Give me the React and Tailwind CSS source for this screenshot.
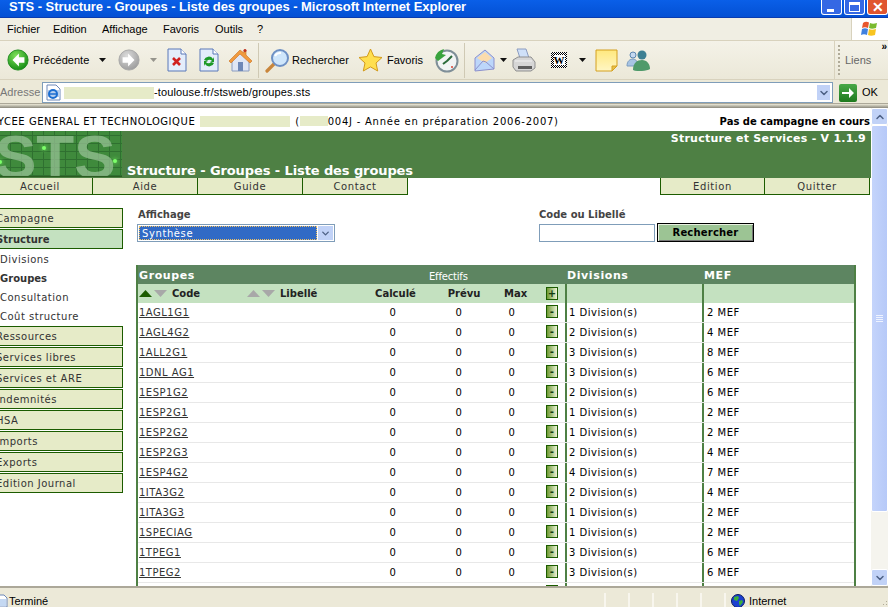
import { ChevronDown, ChevronUp } from 'lucide-react';

const rows = [
	['1AGL1G1', 1, 2],
	['1AGL4G2', 2, 4],
	['1ALL2G1', 3, 8],
	['1DNL AG1', 3, 6],
	['1ESP1G2', 2, 6],
	['1ESP2G1', 1, 2],
	['1ESP2G2', 1, 2],
	['1ESP2G3', 2, 4],
	['1ESP4G2', 4, 7],
	['1ITA3G2', 2, 4],
	['1ITA3G3', 1, 2],
	['1SPECIAG', 1, 2],
	['1TPEG1', 3, 6],
	['1TPEG2', 3, 6],
];

const sideBottom = ['Ressources', 'Services libres', 'Services et ARE', 'Indemnités', 'HSA', 'Imports', 'Exports', 'Edition Journal'];

const Drop = () => (
	<svg width="7" height="4" viewBox="0 0 7 4" className="shrink-0 block"><path d="M0 0h7L3.5 4z" fill="#111" /></svg>
);

const RoundArrow = ({ dir, gray }) => (
	<svg width="22" height="22" viewBox="0 0 24 24" className="shrink-0 block">
		<defs>
			<radialGradient id={gray ? 'rg' : 'rc'} cx="40%" cy="30%" r="75%">
				<stop offset="0" stopColor={gray ? '#dcdcdc' : '#7ee05a'} />
				<stop offset="1" stopColor={gray ? '#9a9a9a' : '#128a12'} />
			</radialGradient>
		</defs>
		<circle cx="12" cy="12" r="11" fill={'url(#' + (gray ? 'rg' : 'rc') + ')'} stroke={gray ? '#a5a5a5' : '#1d8a1d'} />
		<path d={dir === 'left' ? 'M13 5l-7 7 7 7v-4h6V9h-6z' : 'M11 5l7 7-7 7v-4H5V9h6z'} fill="#fff" />
	</svg>
);

const DocIcon = ({ children }) => (
	<svg width="20" height="24" viewBox="0 0 20 24" className="shrink-0 block">
		<path d="M1 1h13l5 5v17H1z" fill="#e4edfb" stroke="#5a78b8" />
		<path d="M14 1v5h5" fill="#fff" stroke="#5a78b8" />
		{children}
	</svg>
);

const HomeIcon = () => (
	<svg width="25" height="24" viewBox="0 0 25 24" className="shrink-0 block">
		<path d="M4 12v11h17V12L12 4z" fill="#dfe6f5" stroke="#8a9cc0" />
		<path d="M1 13L12 2l4 3V2h2v5l6 6-2 2L12 6 3 15z" fill="#f09a3e" stroke="#c96f1c" strokeWidth=".6" />
		<rect x="10" y="14" width="5" height="9" fill="#6e88b8" />
		<circle cx="17" cy="2.5" r="1.5" fill="#c03020" />
	</svg>
);

const SearchIcon = () => (
	<svg width="25" height="25" viewBox="0 0 25 25" className="shrink-0 block">
		<path d="M2 23l8-8" stroke="#c9863c" strokeWidth="3.2" strokeLinecap="round" />
		<circle cx="15" cy="10" r="8" fill="#cfe6fb" stroke="#6e90c4" strokeWidth="2" />
		<path d="M10 8a6 5 0 0 1 6-3" stroke="#fff" strokeWidth="2" fill="none" />
	</svg>
);

const StarIcon = () => (
	<svg width="25" height="24" viewBox="0 0 25 24" className="shrink-0 block">
		<path d="M12.500 1l3.400 7.600 8.100.9-6 5.500 1.700 8-7.200-4.100-7.200 4.100 1.700-8-6-5.500 8.100-.9z" fill="#ffdf4f" stroke="#d29a1c" />
	</svg>
);

const HistoryIcon = () => (
	<svg width="25" height="25" viewBox="0 0 25 25" className="shrink-0 block">
		<circle cx="13" cy="13" r="10.500" fill="#f2f4f4" stroke="#7f8f98" strokeWidth="2" />
		<path d="M13 13l5-5M13 13l-4 3" stroke="#2b6b3a" strokeWidth="2" />
		<path d="M1 10a12 12 0 0 1 9-9l-2 5 4 1-8 6z" fill="#39a33d" />
		<circle cx="18" cy="19" r="1" fill="#d84030" />
	</svg>
);

const MailIcon = () => (
	<svg width="21" height="23" viewBox="0 0 21 23" className="shrink-0 block">
		<path d="M1 9l10-8 9 8v11l-19 2z" fill="#bcd6fa" stroke="#8c90cc" />
		<path d="M3 9l8-6 7 6-7 5z" fill="#fbdcae" />
		<path d="M1 21l8-9 3 1 8 7" stroke="#8c90cc" fill="none" />
	</svg>
);

const PrinterIcon = () => (
	<svg width="24" height="24" viewBox="0 0 24 24" className="shrink-0 block">
		<path d="M5 1h9l3 9H8z" fill="#cfe0f8" stroke="#8c9cc0" />
		<path d="M1 12l5-3h13l4 5v6l-4 3H4l-3-4z" fill="#d6d6d6" stroke="#8f8f8f" />
		<path d="M6 18h14v3H6z" fill="#5e5e5e" />
		<path d="M3 13h17" stroke="#f2f2f2" />
	</svg>
);

const WordIcon = () => (
	<div className="w-4 h-4 shrink-0 bg-[repeating-conic-gradient(#000_0_25%,#fff_0_50%)] bg-[length:2px_2px] flex items-center justify-center">
		<span className="bg-white text-[11px] leading-[10px] font-bold font-['Liberation_Serif',serif] text-black">W</span>
	</div>
);

const NoteIcon = () => (
	<svg width="23" height="23" viewBox="0 0 23 23" className="shrink-0 block">
		<defs>
			<linearGradient id="note" x1="0" y1="0" x2="0" y2="1">
				<stop offset="0" stopColor="#ffe87e" />
				<stop offset="1" stopColor="#fff6c4" />
			</linearGradient>
		</defs>
		<path d="M1 1h21v16l-5 5H1z" fill="url(#note)" stroke="#d4a020" />
		<path d="M22 17h-5v5z" fill="#e8c04a" stroke="#d4a020" />
	</svg>
);

const PeopleIcon = () => (
	<svg width="25" height="21" viewBox="0 0 25 21" className="shrink-0 block">
		<circle cx="7" cy="5" r="3" fill="#c4d8f0" stroke="#5c86b0" />
		<path d="M1 16c0-5 3-7 6-7s5 3 5 7z" fill="#a8c4e4" stroke="#7a9cc0" />
		<circle cx="16" cy="5" r="4.500" fill="#3d7f92" />
		<path d="M7 20c0-7 4-10 9-10s8 4 8 9c-3 2-13 3-17 1z" fill="#4f9a6a" />
	</svg>
);

const WinFlag = () => (
	<svg width="20" height="19" viewBox="0 0 20 19">
		<path d="M3 3c2-1.500 4-1.500 6-.5L8 8C6 7 4 7 2 8z" fill="#e8562c" />
		<path d="M10 3c2 1 4 1 7 0l-1 5c-3 1-5 1-7 0z" fill="#79ba2f" />
		<path d="M2 9c2-1 4-1 6 0l-1 6c-2-1-4-1-6 0z" fill="#3f80e0" />
		<path d="M9 9c2 1 4 1 7 0l-1 6c-3 1-5 1-7 0z" fill="#f8c420" />
	</svg>
);

const GlobeIcon = () => (
	<svg width="14" height="14" viewBox="0 0 14 14" className="shrink-0 block">
		<circle cx="7" cy="7" r="6.500" fill="#1c3fd0" stroke="#0a1c60" />
		<path d="M3 3l4-1 1 2-2 3-3-1zM8 7l3-1 1 2-3 4-1-2z" fill="#3cae3c" />
	</svg>
);

const IEPage = () => (
	<svg width="16" height="17" viewBox="0 0 16 17" className="shrink-0 block">
		<path d="M2 1h9l4 4v11H2z" fill="#fff" stroke="#6c88b8" />
		<path d="M3 6h12v7H3z" fill="#b8d0ee" />
		<circle cx="8" cy="10" r="4" fill="none" stroke="#1c6ed0" strokeWidth="2" />
		<path d="M4 10h8" stroke="#1c6ed0" strokeWidth="1.500" />
	</svg>
);

const WinBtn = ({ red, children }) => (
	<div className={'w-[21px] h-[15px] rounded-b-[3px] border border-t-0 border-white flex items-center justify-center ' + (red ? 'bg-[#e0552f]' : 'bg-[#3568e4]')}>
		{children}
	</div>
);

const TabBtn = ({ text, narrow }) => (
	<div className={'h-[17px] bg-[#e6ebc8] border-b border-r border-[#1c5c00] flex items-center justify-center text-[10px] text-[#333] tracking-[0.6px] ' + (narrow ? 'w-[104px]' : 'w-[105px]')}>
		{text}
	</div>
);

const SideBtn = ({ text, active }) => (
	<div className={'h-[20px] border border-l-0 border-[#1c5c00] pl-[8px] flex items-center text-[10px] ' + (active ? 'bg-[#c4e1c0] font-bold text-[#333]' : 'bg-[#e6ebc8] text-[#333] tracking-[0.5px]')}>
		{text}
	</div>
);

const SmallBtn = ({ sign }) => (
	<div className="w-3 h-[13px] border border-[#1c5c00] bg-gradient-to-r from-[#6f9a2c] to-[#eef3d8] flex items-center justify-center text-[10px] leading-none font-bold text-[#123c10]">
		{sign}
	</div>
);

const SortPair = ({ up }) => (
	<div className="flex items-center gap-[2px]">
		<svg width="13" height="7" viewBox="0 0 13 7"><path d="M6.500 0L13 7H0z" fill={up ? '#1c5c00' : '#a8a8a8'} /></svg>
		<svg width="13" height="7" viewBox="0 0 13 7"><path d="M6.500 7L13 0H0z" fill="#a8a8a8" /></svg>
	</div>
);

const Row = ({ code, div, mef }) => (
	<div className="flex h-5 border-b border-[#e8e8e8] text-[10px] tracking-[0.5px] text-black">
		<div className="w-[228px] pl-[1px] pt-[2px] leading-[15px]">
			<span className="underline text-[#333]">{code}</span>
		</div>
		<div className="w-[54px] text-center pt-[2px] leading-[15px]">0</div>
		<div className="w-[78px] text-center pt-[2px] leading-[15px]">0</div>
		<div className="w-[28px] text-center pt-[2px] leading-[15px]">0</div>
		<div className="w-[39px] pl-[20px] pt-[2px]"><SmallBtn sign="-" /></div>
		<div className="w-[2px] bg-[#4e8044]" />
		<div className="w-[135px] pl-[2px] pt-[2px] leading-[15px]">{div} Division(s)</div>
		<div className="w-[2px] bg-[#4e8044]" />
		<div className="pl-[3px] pt-[2px] leading-[15px]">{mef} MEF</div>
	</div>
);

const App = () => {
	return (
		<div className="w-[888px] h-[607px] overflow-hidden flex flex-col bg-[#ece9d8] font-['Liberation_Sans',sans-serif] text-[11px] text-black">
			{/* barre de titre */}
			<div className="h-[18px] shrink-0 flex items-start justify-between bg-gradient-to-b from-[#0a5fe8] to-[#0450d4] border-b border-[#0a3cb0]">
				<span className="pl-[9px] text-white font-bold text-[13px] leading-[13px] tracking-[-0.04px] whitespace-nowrap">
					STS - Structure - Groupes - Liste des groupes - Microsoft Internet Explorer
				</span>
				<div className="flex gap-[2px]">
					<WinBtn><div className="w-[7px] h-[3px] bg-white mt-[6px] -ml-[3px]" /></WinBtn>
					<WinBtn><div className="w-[11px] h-[10px] border border-t-[3px] border-white" /></WinBtn>
					<WinBtn red><span className="text-white text-[14px] leading-none font-bold">✕</span></WinBtn>
				</div>
			</div>

			{/* menu */}
			<div className="h-[23px] shrink-0 flex border-b border-[#d8d2bd] bg-[#f0eee3]">
				<div className="flex-1 flex items-center pl-[7px]">
					<span className="w-[46px]">Fichier</span>
					<span className="w-[49px]">Edition</span>
					<span className="w-[61px]">Affichage</span>
					<span className="w-[52px]">Favoris</span>
					<span className="w-[42px]">Outils</span>
					<span>?</span>
				</div>
				<div className="w-[37px] flex items-center justify-center bg-white border-l border-[#d8d2bd]"><WinFlag /></div>
			</div>

			{/* barre d'outils */}
			<div className="h-[39px] shrink-0 flex items-center border-b border-[#d8d2bd] bg-gradient-to-b from-[#f4f2e8] to-[#ebe8d8]">
				<div className="flex items-center pl-[7px]">
					<RoundArrow dir="left" />
					<span className="ml-[4px] w-[55px] whitespace-nowrap">Précédente</span>
					<div className="ml-[11px]"><Drop /></div>
					<div className="ml-[12px]"><RoundArrow dir="right" gray /></div>
					<div className="ml-[10px] opacity-40"><Drop /></div>
					<div className="ml-[10px]">
						<DocIcon><path d="M6 10l7 7M13 10l-7 7" stroke="#d02020" strokeWidth="2.600" /></DocIcon>
					</div>
					<div className="ml-[12px]">
						<DocIcon><path d="M5 12a5 5 0 0 1 9-1l1-2v5h-4l2-1a3 3 0 0 0-5 0zM15 15a5 5 0 0 1-9 1l-1 2v-5h4l-2 1a3 3 0 0 0 5 0z" fill="#1e9a28" /></DocIcon>
					</div>
					<div className="ml-[9px]"><HomeIcon /></div>
					<div className="w-[1px] h-[35px] bg-[#cfc9b4] ml-[5px]" />
					<div className="ml-[6px]"><SearchIcon /></div>
					<span className="ml-[2px] w-[55px]">Rechercher</span>
					<div className="ml-[11px]"><StarIcon /></div>
					<span className="ml-[4px] w-[34px]">Favoris</span>
					<div className="ml-[13px]"><HistoryIcon /></div>
					<div className="w-[1px] h-[35px] bg-[#cfc9b4] ml-[5px]" />
					<div className="ml-[9px]"><MailIcon /></div>
					<div className="ml-[5px]"><Drop /></div>
					<div className="ml-[5px]"><PrinterIcon /></div>
					<div className="ml-[15px]"><WordIcon /></div>
					<div className="ml-[12px]"><Drop /></div>
					<div className="ml-[9px]"><NoteIcon /></div>
					<div className="ml-[8px]"><PeopleIcon /></div>
				</div>
				<div className="flex-1" />
				<div className="relative w-[54px] h-full flex items-center border-l border-[#d8d2bd] pl-[3px]">
					<div className="w-[2px] h-[30px] border-l-2 border-dotted border-[#b0ab98]" />
					<span className="ml-[5px] text-[#666]">Liens</span>
					<span className="absolute right-[1px] top-[1px] text-[10px] font-bold leading-none">»</span>
				</div>
			</div>

			{/* adresse */}
			<div className="h-[24px] pt-[2px] shrink-0 flex items-center bg-[#ece9d8] border-b border-[#aca899]">
				<span className="w-[42px] text-[#777]">Adresse</span>
				<div className="w-[791px] h-[21px] flex items-center bg-white border border-[#7f9db9]">
					<div className="ml-[2px]"><IEPage /></div>
					<div className="ml-[3px] w-[90px] h-[12px] bg-[#e6ebc8]" />
					<span className="tracking-[0.13px]">-toulouse.fr/stsweb/groupes.sts</span>
					<div className="flex-1" />
					<div className="w-[15px] h-[17px] mr-[1px] bg-[#c1d2f7] border border-white flex items-center justify-center">
						<ChevronDown size={12} strokeWidth={3} color="#4d6185" />
					</div>
				</div>
				<div className="ml-[6px] w-[18px] h-[18px] bg-gradient-to-b from-[#48a848] to-[#1e7a1e] rounded-[2px] flex items-center justify-center">
					<svg width="14" height="12" viewBox="0 0 14 12"><path d="M1 5h7V1l5 5-5 5V7H1z" fill="#fff" /></svg>
				</div>
				<span className="ml-[5px]">OK</span>
			</div>

			<div className="h-[4px] shrink-0 bg-gradient-to-b from-[#ece9d8] to-[#8a887c]" />

			{/* page */}
			<div className="h-[478px] shrink-0 flex bg-white overflow-hidden font-['DejaVu_Sans',sans-serif]">
				<div className="w-[871px] shrink-0 overflow-hidden">
					<div className="w-[883px] -ml-[12px] flex flex-col">
						<div className="h-[23px] pt-[3px] pr-[1px] flex items-center justify-between pl-[5px] text-[10px] tracking-[0.55px] text-black">
							<div className="flex items-center whitespace-nowrap">
								<span>LYCEE GENERAL ET TECHNOLOGIQUE</span>
								<div className="w-[90px] h-[11px] bg-[#e6ebc8] ml-[5px]" />
								<span className="ml-[5px]">(</span>
								<div className="w-[28px] h-[10px] bg-[#e6ebc8]" />
								<span className="tracking-[0.75px]">004J - Année en préparation 2006-2007)</span>
							</div>
							<span className="font-bold tracking-normal">Pas de campagne en cours</span>
						</div>

						<div className="h-[47px] bg-[#4e8044] flex text-white">
							<div className="relative w-[134px] h-[46px] overflow-hidden shrink-0 bg-[#3f8a3c] bg-[repeating-linear-gradient(90deg,#2f7030_0_1px,transparent_1px_11px),repeating-linear-gradient(0deg,#2f7030_0_1px,transparent_1px_8px)] border-b border-[#2a5c20]">
								<span className="absolute left-[7px] top-[6px] text-[62px] leading-[40px] font-bold font-['Liberation_Sans',sans-serif] text-[#9cc49a]/70">STS</span>
								<div className="absolute left-[54px] top-[15px] w-1 h-1 rounded-full bg-[#7dff6a] shadow-[0_0_4px_#7dff6a]" />
								<div className="absolute left-[125px] top-[28px] w-1 h-1 rounded-full bg-[#7dff6a] shadow-[0_0_4px_#7dff6a]" />
								<div className="absolute left-[10px] top-[29px] w-1 h-1 rounded-full bg-[#7dff6a] shadow-[0_0_4px_#7dff6a]" />
							</div>
							<div className="flex-1 flex flex-col justify-between pl-[5px] pr-[5px]">
								<div className="text-right text-[11px] font-bold tracking-[0.25px] leading-[14px] pt-[1px]">Structure et Services - V 1.1.9</div>
								<div className="text-[13px] font-bold tracking-[-0.1px] leading-[14px]">Structure - Groupes - Liste des groupes</div>
							</div>
						</div>

						<div className="flex h-[17px]">
							{['Accueil', 'Aide', 'Guide', 'Contact'].map((t) => <TabBtn key={t} text={t} />)}
							<div className="w-[252px]" />
							<div className="border-l border-[#1c5c00] flex">
								<TabBtn text="Edition" narrow />
								<TabBtn text="Quitter" />
							</div>
						</div>

						<div className="flex mt-[13px]">
							{/* menu gauche */}
							<div className="w-[135px] shrink-0 flex flex-col gap-[1px]">
								<SideBtn text="Campagne" />
								<SideBtn text="Structure" active />
								<div className="pl-[12px] text-[10px] tracking-[0.5px] text-[#333] flex flex-col leading-[19px] -mb-[1px]">
									<span>Divisions</span>
									<span className="font-bold tracking-normal">Groupes</span>
									<span>Consultation</span>
									<span>Coût structure</span>
								</div>
								{sideBottom.map((s) => <SideBtn key={s} text={s} />)}
							</div>

							{/* contenu */}
							<div className="flex-1 pl-[13px] min-w-0">
								<div className="flex h-[57px]">
									<div className="w-[403px] pl-[1px]">
										<div className="pl-[1px] text-[10px] font-bold text-[#444] leading-[13px]">Affichage</div>
										<div className="mt-[3px] w-[198px] h-[18px] bg-white border border-[#7f9db9] flex items-center p-[1px]">
											<div className="flex-1 h-[14px] bg-[#316ac5] border border-dotted border-[#f0c060] text-white text-[10px] tracking-[0.6px] leading-[13px] pl-[2px]">Synthèse</div>
											<div className="w-[15px] h-[14px] ml-[1px] bg-[#c1d2f7] flex items-center justify-center">
												<ChevronDown size={11} strokeWidth={3} color="#4d6185" />
											</div>
										</div>
									</div>
									<div>
										<div className="text-[10px] font-bold text-[#444] leading-[13px]">Code ou Libellé</div>
										<div className="mt-[3px] flex items-center">
											<div className="w-[116px] h-[18px] bg-white border border-[#7f9db9]" />
											<button className="ml-[2px] -mt-[1px] w-[97px] h-[19px] bg-[#9cc494] border border-black shadow-[inset_1px_1px_0_#e8f0e0,inset_-1px_-1px_0_#777] text-[10px] font-bold tracking-[0.2px] leading-none text-black">Rechercher</button>
										</div>
									</div>
								</div>

								{/* tableau */}
								<div className="w-[720px] border-x-2 border-[#4e8044]">
									<div className="h-[19px] pt-[4px] bg-[#5d8561] text-white flex items-center">
										<div className="w-[291px] pl-[1px] font-bold text-[11px] tracking-[0.6px]">Groupes</div>
										<div className="w-[42px] text-[10px] tracking-[-0.2px] whitespace-nowrap">Effectifs</div>
										<div className="w-[95px]" />
										<div className="w-[137px] pl-[1px] font-bold text-[11px] tracking-[0.6px]">Divisions</div>
										<div className="pl-[1px] font-bold text-[11px] tracking-[0.6px]">MEF</div>
									</div>
									<div className="h-[19px] bg-[#c4e1c0] flex items-center text-[10px] font-bold text-[#222]">
										<div className="w-[228px] flex items-center pl-[1px]">
											<SortPair up />
											<span className="ml-[5px] w-[75px]">Code</span>
											<SortPair />
											<span className="ml-[5px]">Libellé</span>
										</div>
										<div className="w-[54px] text-center pl-[5px]">Calculé</div>
										<div className="w-[78px] text-center pl-[10px]">Prévu</div>
										<div className="w-[28px] text-center pl-[6px]">Max</div>
										<div className="w-[39px] pl-[20px]"><SmallBtn sign="+" /></div>
										<div className="w-[2px] h-full bg-[#4e8044]" />
										<div className="w-[135px]" />
										<div className="w-[2px] h-full bg-[#4e8044]" />
									</div>
									{rows.map((r) => <Row key={r[0]} code={r[0]} div={r[1]} mef={r[2]} />)}
									<div className="flex h-5">
										<div className="w-[388px]" />
										<div className="w-[39px] pl-[20px] pt-[2px]"><SmallBtn sign="-" /></div>
										<div className="w-[2px] bg-[#4e8044]" />
										<div className="w-[135px]" />
										<div className="w-[2px] bg-[#4e8044]" />
									</div>
								</div>
							</div>
						</div>
					</div>
				</div>

				{/* ascenseur */}
				<div className="flex-1 flex flex-col bg-[#f5f4ee]">
					<div className="h-[17px] bg-[#c1d2f7] border border-white rounded-[2px] flex items-center justify-center"><ChevronUp size={12} strokeWidth={3} color="#4d6185" /></div>
					<div className="h-[387px] bg-gradient-to-r from-[#c4d4fb] to-[#b6c9f8] border border-white rounded-[2px] flex items-center justify-center">
						<div className="w-[7px] h-[7px] bg-[linear-gradient(#eef3ff_1px,transparent_1px)] bg-[length:100%_2px]" />
					</div>
					<div className="flex-1" />
					<div className="h-[17px] bg-[#c1d2f7] border border-white rounded-[2px] flex items-center justify-center"><ChevronDown size={12} strokeWidth={3} color="#4d6185" /></div>
				</div>
			</div>

			{/* barre d'état */}
			<div className="flex-1 flex items-center pt-[5px] border-t-2 border-[#aca899] bg-[#ece9d8]">
				<svg width="12" height="14" viewBox="0 0 12 14" className="shrink-0 -ml-[4px]"><path d="M1 1h7l3 3v9H1z" fill="#fff" stroke="#6c88b8" /><path d="M2 5h8v7H2z" fill="#c4d8f2" /></svg>
				<span className="ml-[1px] w-[38px]">Terminé</span>
				<div className="w-[557px] h-full" />
				{[0, 1, 2, 3, 4].map((i) => <div key={i} className="w-6 h-full border-l-2 border-[#f8f6ee]" />)}
				<div className="h-full border-l-2 border-[#f8f6ee] pl-[5px] flex items-center">
					<GlobeIcon />
					<span className="ml-[4px]">Internet</span>
				</div>
				<svg width="9" height="9" viewBox="0 0 9 9" className="ml-auto self-end mb-[1px]"><path d="M7 1h1v1H7zM4 4h1v1H4zM7 4h1v1H7zM1 7h1v1H1zM4 7h1v1H4zM7 7h1v1H7z" fill="#b0ab98" /></svg>
			</div>
		</div>
	);
};

export default App;
